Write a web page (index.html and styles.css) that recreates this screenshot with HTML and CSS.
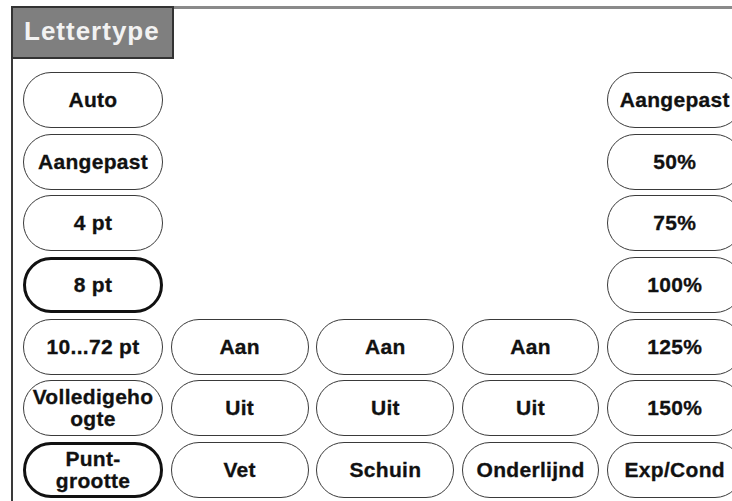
FILE: index.html
```html
<!DOCTYPE html>
<html lang="nl">
<head>
    <meta charset="UTF-8">
    <meta name="viewport" content="width=device-width, initial-scale=1.0">
    <title>Lettertype</title>
    <link rel="stylesheet" href="styles.css">
</head>
<body>
    <div class="panel">
        <div class="tab">Lettertype</div>
        <div class="grid">
            <!-- rij 1 -->
            <div class="btn">Auto</div>
            <div></div><div></div><div></div>
            <div class="btn">Aangepast</div>
            <!-- rij 2 -->
            <div class="btn">Aangepast</div>
            <div></div><div></div><div></div>
            <div class="btn">50%</div>
            <!-- rij 3 -->
            <div class="btn">4 pt</div>
            <div></div><div></div><div></div>
            <div class="btn">75%</div>
            <!-- rij 4 -->
            <div class="btn selected">8 pt</div>
            <div></div><div></div><div></div>
            <div class="btn">100%</div>
            <!-- rij 5 -->
            <div class="btn">10...72 pt</div>
            <div class="btn">Aan</div>
            <div class="btn">Aan</div>
            <div class="btn">Aan</div>
            <div class="btn">125%</div>
            <!-- rij 6 -->
            <div class="btn two"><span>Volledigeho<br>ogte</span></div>
            <div class="btn">Uit</div>
            <div class="btn">Uit</div>
            <div class="btn">Uit</div>
            <div class="btn">150%</div>
            <!-- rij 7 -->
            <div class="btn two selected"><span>Punt-<br>grootte</span></div>
            <div class="btn">Vet</div>
            <div class="btn">Schuin</div>
            <div class="btn">Onderlijnd</div>
            <div class="btn">Exp/Cond</div>
        </div>
    </div>
</body>
</html>
```

FILE: styles.css
```css
body {
    font-family: "Liberation Sans", Arial, sans-serif;
    margin: 0;
    padding: 0;
    background-color: white;
    overflow: hidden;
    height: 501px;
}
.panel {
    margin: 6px 0 0 11px;
    height: 492px;
    border-top: 3px solid #8a8a8a;
    border-left: 2px solid #3a3a3a;
}
.tab {
    margin: -3px 0 0 -2px;
    padding-left: 11px;
    box-sizing: border-box;
    width: 163px;
    height: 53px;
    background: #7f7f7f;
    border: 2px solid #333;
    color: #f2f2f2;
    font-size: 26px;
    font-weight: bold;
    letter-spacing: 1px;
    line-height: 46px;
}
.grid {
    display: grid;
    grid-template-columns: 140px 138px 138px 137px 136px;
    grid-auto-rows: 56px;
    column-gap: 7.7px;
    row-gap: 5.7px;
    margin: 13px 0 0 10px;
}
.btn {
    display: flex;
    align-items: center;
    justify-content: center;
    box-sizing: border-box;
    border: 1.5px solid #3a3a3a;
    border-radius: 28px;
    color: #111;
    font-size: 21px;
    font-weight: bold;
    letter-spacing: 0.3px;
    -webkit-text-stroke: 0.3px #111;
    white-space: nowrap;
    text-align: center;
}
.btn.two {
    line-height: 22px;
}
.btn.selected {
    border: 3px solid #111;
}
```
